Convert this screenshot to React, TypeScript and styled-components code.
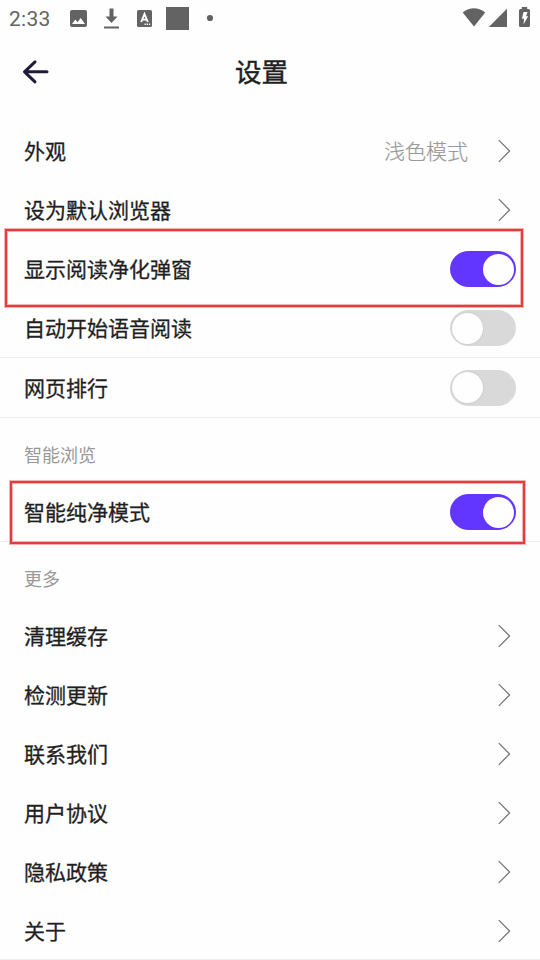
import React from 'react';
import styled, { createGlobalStyle } from 'styled-components';

const GlobalStyle = createGlobalStyle`
  * { box-sizing: border-box; }
  body {
    margin: 0;
    background: #fefefe;
    font-family: Roboto, "Noto Sans CJK SC", sans-serif;
    overflow: hidden;
  }
`;

const Screen = styled.main`
  width: 540px;
  height: 960px;
  overflow: hidden;
  background: #fefefe;
  color: #1f1f1f;
`;

const StatusBar = styled.header`
  height: 36px;
  display: flex;
  justify-content: space-between;
  color: #636363;
`;

const StatusGroup = styled.div`
  display: flex;
  height: 36px;
`;

const Clock = styled.time`
  width: 68px;
  padding-left: 9px;
  font: 400 21px/38px Roboto, sans-serif;
  letter-spacing: 0.3px;
`;

const TitleBar = styled.div`
  height: 86px;
  display: grid;
  grid-template-columns: 72px 1fr 90px;
`;

const BackButton = styled.button`
  height: 72px;
  padding: 0;
  border: 0;
  background: none;
  display: block;
`;

const Title = styled.h1`
  margin: 0;
  padding: 2px 0 0 1px;
  text-align: center;
  font-size: 26.5px;
  line-height: 70px;
  font-weight: 400;
  -webkit-text-stroke: 0.45px currentColor;
`;

const Row = styled.div<{ $height?: number; $divided?: boolean }>`
  position: relative;
  display: flex;
  align-items: center;
  height: ${(p) => p.$height ?? 59}px;
  padding: 0 24px;
  border-bottom: 1px solid ${(p) => (p.$divided ? '#eeeeee' : 'transparent')};
`;

const Label = styled.span`
  flex: 1;
  padding-top: 2px;
  font-size: 21px;
  line-height: 30px;
  -webkit-text-stroke: 0.3px currentColor;
`;

const Value = styled.span`
  margin-right: 30px;
  padding-top: 2px;
  font-size: 21px;
  line-height: 30px;
  font-weight: 300;
  color: #999999;
  -webkit-text-stroke: 0.2px currentColor;
`;

const SectionTitle = styled.h2`
  margin: 0;
  height: 65px;
  padding: 11px 24px 0;
  display: flex;
  align-items: center;
  line-height: 26px;
  font-size: 18px;
  font-weight: 400;
  color: #999999;
`;

const Switch = styled.button<{ $on?: boolean }>`
  width: 66px;
  height: 36px;
  padding: 0 2px;
  border: 0;
  border-radius: 19px / 18px;
  display: flex;
  align-items: center;
  justify-content: ${(p) => (p.$on ? 'flex-end' : 'flex-start')};
  background: ${(p) => (p.$on ? '#6236ff' : '#d9d9d9')};
`;

const Knob = styled.span<{ $on?: boolean }>`
  width: 31px;
  height: 31px;
  border-radius: 50%;
  background: #fefefe;
  box-shadow: ${(p) => (p.$on ? 'none' : '0 0 2px #bcbcbc')};
`;

const Highlight = styled.div<{ $left: number; $top: number; $width: number; $height: number }>`
  position: absolute;
  z-index: 1;
  left: ${(p) => p.$left}px;
  top: ${(p) => p.$top}px;
  width: ${(p) => p.$width}px;
  height: ${(p) => p.$height}px;
  border: 2px solid #e43c3c;
  box-shadow: 0 0 0 1px #f5b4b4, inset 0 0 0 1px #f5b4b4;
  pointer-events: none;
`;

const ChevronSvg = styled.svg`
  display: block;
  margin-right: 5px;
`;

const Chevron = () => (
  <ChevronSvg width="13" height="24" viewBox="0 0 13 24" fill="none" stroke="#737373" strokeWidth="1.2">
    <path d="M.8 1.2 11.6 12 .8 22.8" />
  </ChevronSvg>
);

interface Item {
  label: string;
  value?: string;
  on?: boolean;
  height?: number;
  divided?: boolean;
  frame?: { $left: number; $top: number; $width: number; $height: number };
}

const general: Item[] = [
  { label: '外观', value: '浅色模式' },
  { label: '设为默认浏览器' },
  { label: '显示阅读净化弹窗', on: true, frame: { $left: 5, $top: -11, $width: 518, $height: 78 } },
  { label: '自动开始语音阅读', on: false, divided: true },
  { label: '网页排行', on: false, divided: true, height: 60 },
];

const smart: Item[] = [
  { label: '智能纯净模式', on: true, divided: true, frame: { $left: 10, $top: -2, $width: 515, $height: 63 } },
];

const more: Item[] = [
  { label: '清理缓存' },
  { label: '检测更新' },
  { label: '联系我们' },
  { label: '用户协议' },
  { label: '隐私政策' },
  { label: '关于', divided: true, height: 58 },
];

const SettingRow = ({ item }: { item: Item }) => (
  <Row $height={item.height} $divided={item.divided}>
    <Label>{item.label}</Label>
    {item.value && <Value>{item.value}</Value>}
    {item.on === undefined ? (
      <Chevron />
    ) : (
      <Switch $on={item.on} role="switch" aria-checked={item.on} aria-label={item.label}>
        <Knob $on={item.on} />
      </Switch>
    )}
    {item.frame && <Highlight {...item.frame} />}
  </Row>
);

const NotificationIcons = () => (
  <svg width="160" height="36" viewBox="68 0 160 36" fill="#636363">
    <path fillRule="evenodd" d="M72 10h13q2 0 2 2v13q0 2-2 2H72q-2 0-2-2V12q0-2 2-2Zm0 14h13l-4.3-6-3.2 4.2-2.2-2.7Z" />
    <path d="M109.5 8.5h4v8h4L111.5 23l-6-6.5h4ZM104 26.5h15v2h-15Z" />
    <rect x="137" y="10" width="15" height="17" rx="1.6" />
    <path d="M141.2 22 144.5 14l3.3 8M142.4 19.6h4.3" fill="none" stroke="#fff" strokeWidth="1.9" />
    <path d="M144.5 23.5h1.3v1.4h-1.3Zm2.2 0h1.3v1.4h-1.3Zm2.2 0h1.3v1.4h-1.3Z" fill="#fff" />
    <path d="M166 7h23v23h-23Z" />
    <circle cx="210" cy="18" r="3.1" />
  </svg>
);

const SystemIcons = () => (
  <svg width="80" height="36" viewBox="460 0 80 36" fill="#636363">
    <path d="M462.7 12.4Q473.8 4 485.2 12.4L474 26.6Z" />
    <path d="M507 8.7V27h-18.2Z" />
    <path d="M521.8 7h5.4v2h1.3q1.5 0 1.5 1.5v15q0 1.5-1.5 1.5h-8q-1.5 0-1.5-1.5v-15q0-1.5 1.5-1.5h1.3Z" />
    <path d="M523.5 12h4l-1.4 4.3h2l-4.6 8.2.6-5.7h-2.2Z" fill="#fff" />
  </svg>
);

export default function App() {
  return (
    <>
      <GlobalStyle />
      <Screen>
        <StatusBar>
          <StatusGroup>
            <Clock>2:33</Clock>
            <NotificationIcons />
          </StatusGroup>
          <SystemIcons />
        </StatusBar>
        <TitleBar>
          <BackButton aria-label="返回">
            <svg width="72" height="72" viewBox="0 36 72 72" fill="none" stroke="#201a3a" strokeWidth="3" strokeLinecap="round" strokeLinejoin="round">
              <path d="M47 71.8H24.5M35 61.8 24.5 71.8 35 81.8" />
            </svg>
          </BackButton>
          <Title>设置</Title>
        </TitleBar>
        {general.map((item) => <SettingRow key={item.label} item={item} />)}
        <SectionTitle>智能浏览</SectionTitle>
        {smart.map((item) => <SettingRow key={item.label} item={item} />)}
        <SectionTitle>更多</SectionTitle>
        {more.map((item) => <SettingRow key={item.label} item={item} />)}
      </Screen>
    </>
  );
}
